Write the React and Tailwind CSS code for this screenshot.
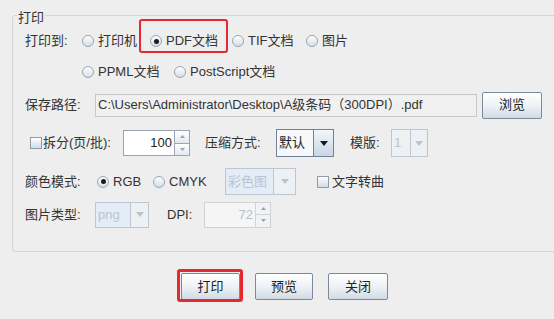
import React from 'react';

const Radio = ({ checked }) => (
  <span className="relative flex h-[12px] w-[12px] shrink-0 items-center justify-center rounded-full border border-[#9aa6b2] bg-gradient-to-b from-[#ffffff] to-[#d3dde8]">
    {checked && <span className="h-[5px] w-[5px] rounded-full bg-[#1c1c1c]" />}
  </span>
);

const Check = () => (
  <span className="block h-[12px] w-[12px] shrink-0 border border-[#8e9cab] bg-gradient-to-b from-[#ffffff] to-[#cfdbe8]" />
);

const Caret = ({ disabled }) => (
  <svg width="8" height="5" viewBox="0 0 8 5">
    <path d="M0 0 L8 0 L4 5 Z" fill={disabled ? '#b9c4d0' : '#1a1a1a'} />
  </svg>
);

const Combo = ({ text, textW, arrowW, disabled, tint }) => (
  <div
    className={`flex h-full border ${disabled ? 'border-[#bcc7d3]' : 'border-[#6f8297]'}`}
  >
    <div
      className={`flex items-center px-[2px] ${tint ? 'bg-[#e4ecf5]' : disabled ? 'bg-[#eef0f2]' : 'bg-[#f7f8fa]'} ${disabled ? 'text-[#b7c6d6]' : 'text-[#222]'}`}
      style={{ width: textW }}
    >
      {text}
    </div>
    <div
      className={`flex items-center justify-center border-l ${disabled ? 'border-[#bcc7d3] bg-[#eef1f4]' : 'border-[#6f8297] bg-gradient-to-b from-[#f2f6fa] to-[#c9d6e4]'}`}
      style={{ width: arrowW }}
    >
      <Caret disabled={disabled} />
    </div>
  </div>
);

const Spinner = ({ value, disabled }) => (
  <div className="flex h-full">
    <div
      className={`flex w-[52px] items-center justify-end border pr-[2px] ${disabled ? 'border-[#cdd3da] bg-[#f5f5f5] text-[#b8c0c8]' : 'border-[#9aa4b0] bg-white text-[#222]'}`}
    >
      {value}
    </div>
    <div className="flex w-[15px] flex-col">
      <div className={`flex flex-1 items-center justify-center border border-l-0 ${disabled ? 'border-[#cdd3da] bg-[#f3f3f3]' : 'border-[#9aa4b0] bg-gradient-to-b from-white to-[#e4e9ef]'}`}>
        <svg width="5" height="3" viewBox="0 0 5 3"><path d="M0 3 L2.5 0 L5 3 Z" fill="#9aa4b0" /></svg>
      </div>
      <div className={`flex flex-1 items-center justify-center border border-l-0 border-t-0 ${disabled ? 'border-[#cdd3da] bg-[#f3f3f3]' : 'border-[#9aa4b0] bg-gradient-to-b from-white to-[#e4e9ef]'}`}>
        <svg width="5" height="3" viewBox="0 0 5 3"><path d="M0 0 L5 0 L2.5 3 Z" fill="#9aa4b0" /></svg>
      </div>
    </div>
  </div>
);

const Button = ({ children, w }) => (
  <button
    className="flex h-[27px] items-center justify-center rounded-[2px] border border-[#7a8a99] bg-gradient-to-b from-[#ffffff] via-[#eef2f6] to-[#d2dbe5] text-[13px] text-[#222]"
    style={{ width: w }}
  >
    {children}
  </button>
);

export default function App() {
  return (
    <div className="h-[319px] w-[554px] overflow-hidden bg-[#eeeeee] pt-[7px] font-['Liberation_Sans','Noto_Sans_CJK_SC',sans-serif] text-[13px] leading-[16px] text-[#333]">
      <fieldset className="ml-[12px] w-[560px] rounded-[3px] border border-[#cfd6dd] px-0 pb-[23px]">
        <legend className="ml-[4px] px-[1px] leading-[16px]">
          <span className="relative top-[3px]">打印</span>
        </legend>

        <div className="flex flex-col pl-[12px]">
          {/* 打印到 */}
          <div className="mt-[8px] flex h-[20px] items-center">
            <span className="w-[57px]">打印到:</span>
            <label className="flex w-[68px] items-center gap-[4px]"><Radio />打印机</label>
            <label className="relative flex w-[82px] items-center gap-[4px]">
              <Radio checked />PDF文档
              <span className="absolute -top-[14px] -bottom-[4px] -left-[11px] right-[4px] rounded-[3px] border-2 border-[#e42a2f]" />
            </label>
            <label className="flex w-[74px] items-center gap-[4px]"><Radio />TIF文档</label>
            <label className="flex items-center gap-[4px]"><Radio />图片</label>
          </div>
          <div className="mt-[11px] flex h-[20px] items-center pl-[57px]">
            <label className="flex w-[92px] items-center gap-[4px]"><Radio />PPML文档</label>
            <label className="flex items-center gap-[4px]"><Radio />PostScript文档</label>
          </div>

          {/* 保存路径 */}
          <div className="mt-[10px] flex h-[26px] items-center">
            <span className="w-[70px]">保存路径:</span>
            <div className="flex h-[23px] w-[382px] items-center border border-[#c5c9ce] bg-[#f0f0f0] pl-[2px] text-[#333]">
              C:\Users\Administrator\Desktop\A级条码（300DPI）.pdf
            </div>
            <div className="ml-[5px]"><Button w={60}>浏览</Button></div>
          </div>

          {/* 拆分 */}
          <div className="mt-[11px] flex h-[28px] items-center">
            <span className="ml-[5px]"><Check /></span>
            <span className="ml-[1px] w-[80px]">拆分(页/批):</span>
            <div className="h-[26px]"><Spinner value="100" /></div>
            <span className="ml-[15px] w-[71px]">压缩方式:</span>
            <div className="h-[28px]"><Combo text="默认" textW={36} arrowW={20} /></div>
            <span className="ml-[16px] w-[41px]">模版:</span>
            <div className="h-[28px]"><Combo text="1" textW={18} arrowW={17} disabled /></div>
          </div>

          {/* 颜色模式 */}
          <div className="mt-[11px] flex h-[27px] items-center">
            <span className="w-[72px]">颜色模式:</span>
            <label className="flex w-[56px] items-center gap-[4px]"><Radio checked />RGB</label>
            <label className="flex w-[72px] items-center gap-[4px]"><Radio />CMYK</label>
            <div className="h-[27px]"><Combo text="彩色图" textW={47} arrowW={22} disabled tint /></div>
            <label className="ml-[21px] flex items-center gap-[3px]"><Check />文字转曲</label>
          </div>

          {/* 图片类型 */}
          <div className="mt-[6px] flex h-[27px] items-center">
            <span className="w-[70px]">图片类型:</span>
            <div className="h-[26px]"><Combo text="png" textW={34} arrowW={18} disabled tint /></div>
            <span className="ml-[18px] w-[37px]">DPI:</span>
            <div className="h-[26px]"><Spinner value="72" disabled /></div>
          </div>
        </div>
      </fieldset>

      <div className="mt-[21px] flex gap-[15px] pl-[181px]">
        <div className="relative">
          <Button w={59}>打印</Button>
          <span className="absolute -top-[4px] -bottom-[2px] -left-[4px] -right-[3px] rounded-[3px] border-[3px] border-[#e42a2f]" />
        </div>
        <Button w={58}>预览</Button>
        <Button w={60}>关闭</Button>
      </div>
    </div>
  );
}
